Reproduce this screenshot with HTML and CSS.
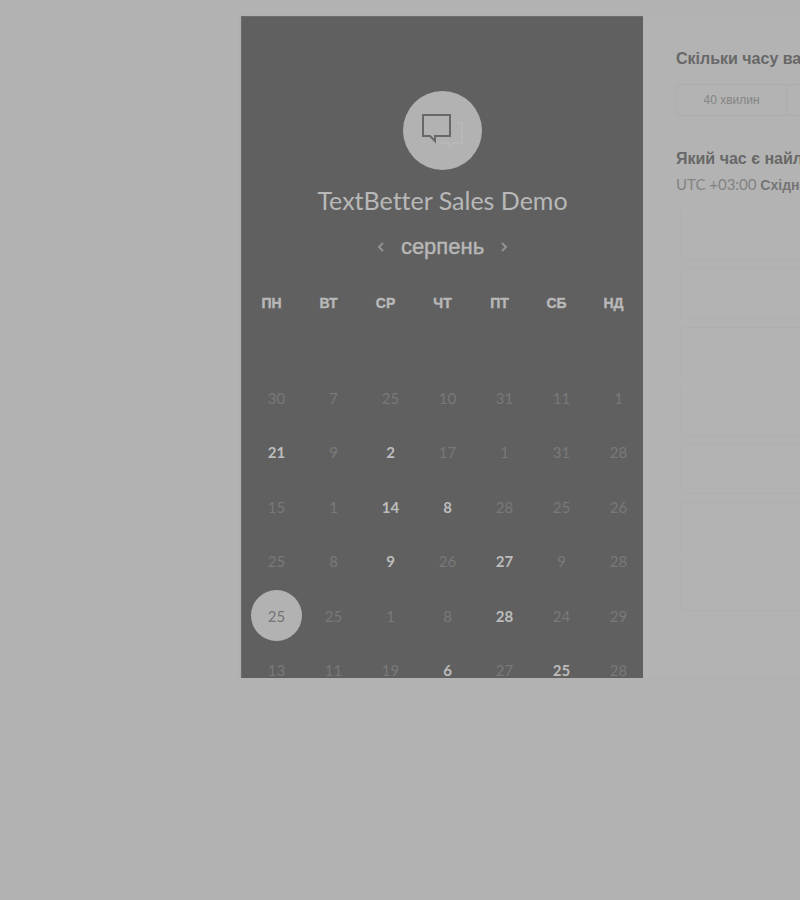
FILE: index.html
```html
<!DOCTYPE html>
<html lang="uk">
<head>
<meta charset="utf-8">
<meta name="viewport" content="width=device-width, initial-scale=1">
<title>TextBetter Sales Demo</title>
<link rel="stylesheet" href="styles.css">
</head>
<body>
<main class="scheduler">
  <section class="calendar">
    <div class="logo">
      <svg viewBox="0 0 79 79" width="79" height="79" aria-hidden="true">
        <path class="bubble-back" d="M54 32h5v20h-8l-5 5v-5H37"/>
        <path class="bubble-front" d="M20 24h27v21H32v5l-5-5h-7z"/>
      </svg>
    </div>
    <h1 class="title">TextBetter Sales Demo</h1>
    <div class="month">
      <button class="arrow" type="button" aria-label="Назад"><svg viewBox="0 0 8 12" width="8" height="12"><path d="M6 2L2 6l4 4"/></svg></button>
      <h2 class="month-name">серпень</h2>
      <button class="arrow" type="button" aria-label="Далі"><svg viewBox="0 0 8 12" width="8" height="12"><path d="M2 2l4 4-4 4"/></svg></button>
    </div>
    <table class="days">
      <thead><tr><th>ПН</th><th>ВТ</th><th>СР</th><th>ЧТ</th><th>ПТ</th><th>СБ</th><th>НД</th></tr></thead>
      <tbody>
        <tr><td>30</td><td>7</td><td>25</td><td>10</td><td>31</td><td>11</td><td>1</td></tr>
        <tr><td><button type="button" class="day">21</button></td><td>9</td><td><button type="button" class="day">2</button></td><td>17</td><td>1</td><td>31</td><td>28</td></tr>
        <tr><td>15</td><td>1</td><td><button type="button" class="day">14</button></td><td><button type="button" class="day">8</button></td><td>28</td><td>25</td><td>26</td></tr>
        <tr><td>25</td><td>8</td><td><button type="button" class="day">9</button></td><td>26</td><td><button type="button" class="day">27</button></td><td>9</td><td>28</td></tr>
        <tr><td><button type="button" class="day selected">25</button></td><td>25</td><td>1</td><td>8</td><td><button type="button" class="day">28</button></td><td>24</td><td>29</td></tr>
        <tr><td>13</td><td>11</td><td>19</td><td><button type="button" class="day">6</button></td><td>27</td><td><button type="button" class="day">25</button></td><td>28</td></tr>
      </tbody>
    </table>
  </section>
  <section class="booking">
    <h3 class="question">Скільки часу вам потрібно?</h3>
    <div class="durations">
      <button type="button" class="duration">40 хвилин</button>
      <button type="button" class="duration" aria-label="Інша тривалість"></button>
    </div>
    <h3 class="question">Який час є найлегшим?</h3>
    <p class="zone">UTC +03:00 <b>Східноєвропейський час</b></p>
    <div class="slots">
      <button type="button" class="slot open-top" aria-label="Час 1"></button>
      <button type="button" class="slot" aria-label="Час 2"></button>
      <button type="button" class="slot open-bottom" aria-label="Час 3"></button>
      <button type="button" class="slot open-top" aria-label="Час 4"></button>
      <button type="button" class="slot" aria-label="Час 5"></button>
      <button type="button" class="slot open-bottom" aria-label="Час 6"></button>
      <button type="button" class="slot open-top" aria-label="Час 7"></button>
      <button type="button" class="slot last" aria-label="Час 8"></button>
    </div>
  </section>
</main>
</body>
</html>
```

FILE: styles.css
```css
* { box-sizing: border-box; }

body {
  margin: 0;
  background: #b2b2b2;
  font-family: Lato, "Liberation Sans", sans-serif;
  overflow-x: hidden;
}

h1, h2, h3, p { margin: 0; }

button {
  margin: 0;
  padding: 0;
  border: 0;
  background: none;
  color: inherit;
  font: inherit;
}

.scheduler {
  display: flex;
  padding: 16px 0 0 241px;
}

.calendar {
  flex: 0 0 402px;
  display: flex;
  flex-direction: column;
  align-items: center;
  max-height: 662px;
  padding-top: 74px;
  overflow: hidden;
  background: #606060;
  color: #b8b8b8;
  border: 1px solid #6c6c6c;
  border-width: 1px 0 0 1px;
  box-shadow: 0 1px 3px #a4a4a4;
}

.logo {
  flex: none;
  width: 79px;
  height: 79px;
  border-radius: 50%;
  background: #b2b2b2;
}

.logo svg { display: block; fill: none; }
.bubble-front { stroke: #686868; stroke-width: 2; }
.bubble-back { stroke: #b7b7b7; stroke-width: 2; }

.title {
  margin-top: 14px;
  font-size: 25px;
  font-weight: 400;
  line-height: 32px;
  font-variant-ligatures: none;
}

.month {
  display: flex;
  align-items: center;
  gap: 16px;
  margin-top: 16px;
}

.month-name {
  font: 400 22px/30px "Liberation Sans", sans-serif;
  -webkit-text-stroke: 0.4px;
}

.arrow svg {
  display: block;
  fill: none;
  stroke: #939393;
  stroke-width: 2;
}

.days {
  flex: none;
  align-self: flex-start;
  width: 399px;
  margin: 31px 0 0 6px;
  border-collapse: collapse;
  table-layout: fixed;
}

.days th {
  height: 77px;
  padding: 0 10px 0 0;
  vertical-align: top;
  font: 700 14px/20px "Liberation Sans", sans-serif;
  -webkit-text-stroke: 0.4px;
}

.days td {
  height: 55px;
  padding: 0;
  text-align: center;
  color: #797979;
  font-size: 15px;
  line-height: 20px;
}

.days tr:nth-child(even) td { height: 54px; }

.day {
  display: block;
  width: 51px;
  height: 51px;
  margin: 0 auto;
  border-radius: 50%;
  color: #bcbcbc;
  font-weight: 700;
}

.day.selected {
  background: #b2b2b2;
  color: #747474;
  font-weight: 400;
}

.booking {
  flex: 1 1 0;
  min-width: 0;
  display: flex;
  flex-direction: column;
  padding: 33px 0 8px 33px;
  overflow: hidden;
  background: #b3b3b3;
  border-bottom: 1px solid #b0b0b0;
  white-space: nowrap;
}

.question {
  color: #686868;
  font: 700 16px/20px "Liberation Sans", sans-serif;
}

.durations {
  display: flex;
  margin: 15px 0 33px;
}

.duration {
  flex: none;
  width: 111px;
  height: 32px;
  border: 1px solid #adadad;
  border-radius: 3px 0 0 3px;
  color: #858585;
  font: 12px/16px "Liberation Sans", sans-serif;
}

.duration + .duration { margin-left: -1px; }

.zone {
  margin-top: 5px;
  color: #828282;
  font-size: 15px;
  line-height: 20px;
}

.zone b {
  color: #757575;
  font: 700 14px/20px "Liberation Sans", sans-serif;
}

.slots {
  flex: 1;
  display: grid;
  grid-auto-rows: 1fr;
  gap: 8px;
  width: 220px;
  margin: 15px 0 0 4px;
}

.slot {
  border: 1px solid #afafaf;
  border-radius: 3px;
}

.open-top { border-top-color: transparent; }
.open-bottom { border-bottom-color: transparent; }
.last { border-color: transparent; }
```
